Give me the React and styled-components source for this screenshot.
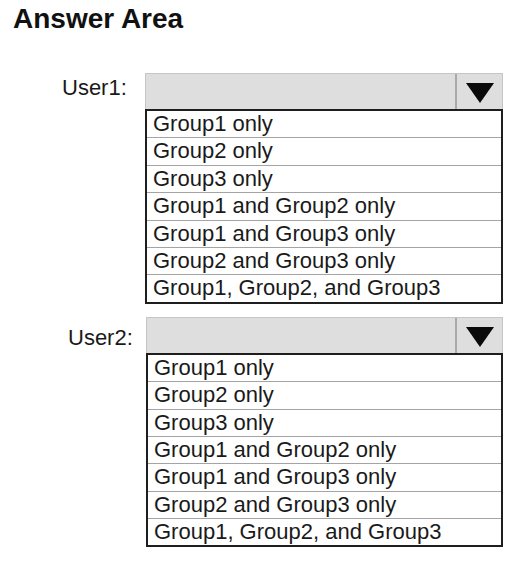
import styled, { createGlobalStyle } from 'styled-components';

const GlobalStyle = createGlobalStyle`
  body {
    margin: 0;
    background: #ffffff;
    font-family: "Liberation Sans", Arial, sans-serif;
  }
`;

const OPTIONS = [
  'Group1 only',
  'Group2 only',
  'Group3 only',
  'Group1 and Group2 only',
  'Group1 and Group3 only',
  'Group2 and Group3 only',
  'Group1, Group2, and Group3',
];

const FIELDS = [
  { name: 'User1:', indent: 62, offset: -3, shift: 0 },
  { name: 'User2:', indent: 68, offset: 3, shift: 1 },
];

const Arrow = () => (
  <svg width="28" height="20" viewBox="0 0 28 20">
    <polygon points="0,0 28,0 14,20" fill="#0a0a0a" />
  </svg>
);

const App = () => {
  return (
    <Page>
      <GlobalStyle />
      <Title>Answer Area</Title>
      <Form>
        {FIELDS.map((field) => (
          <Field key={field.name}>
            <Label indent={field.indent} offset={field.offset}>{field.name}</Label>
            <Dropdown shift={field.shift}>
              <Header>
                <Value />
                <ArrowButton>
                  <Arrow />
                </ArrowButton>
              </Header>
              <List>
                {OPTIONS.map((opt) => (
                  <Option key={opt}>{opt}</Option>
                ))}
              </List>
            </Dropdown>
          </Field>
        ))}
      </Form>
    </Page>
  );
};

export default App;

const Page = styled.div`
  width: 530px;
  height: 567px;
  padding-top: 3px;
  box-sizing: border-box;
`;

const Title = styled.h1`
  margin: 0 0 0 13px;
  font-size: 28px;
  line-height: 32px;
  font-weight: 700;
  color: #111111;
`;

const Form = styled.div`
  margin-top: 38px;
  display: flex;
  flex-direction: column;
  gap: 13px;
`;

const Field = styled.div`
  display: grid;
  grid-template-columns: 145px 358px;
  align-items: start;
`;

const Label = styled.div`
  padding-left: ${(props) => props.indent}px;
  margin-top: ${(props) => props.offset}px;
  font-size: 22px;
  line-height: 36px;
  color: #1a1a1a;
`;

const Dropdown = styled.div`
  display: flex;
  flex-direction: column;
  margin-left: ${(props) => props.shift}px;
`;

const Header = styled.div`
  display: flex;
  height: 36px;
  box-sizing: border-box;
  background: #dedede;
  border: 1px solid #c6c6c6;
  border-bottom: none;
`;

const Value = styled.div`
  flex: 1;
`;

const ArrowButton = styled.div`
  width: 47px;
  display: flex;
  justify-content: center;
  padding-top: 9px;
  box-sizing: border-box;
  border-left: 2px solid #a9a9a9;
`;

const List = styled.div`
  display: flex;
  flex-direction: column;
  border: 2px solid #1e1e1e;
`;

const Option = styled.div`
  height: 26.4px;
  line-height: 26.4px;
  padding-left: 6px;
  font-size: 22px;
  color: #1a1a1a;
  white-space: nowrap;
  & + & {
    border-top: 1px solid #a4a4a4;
  }
`;
